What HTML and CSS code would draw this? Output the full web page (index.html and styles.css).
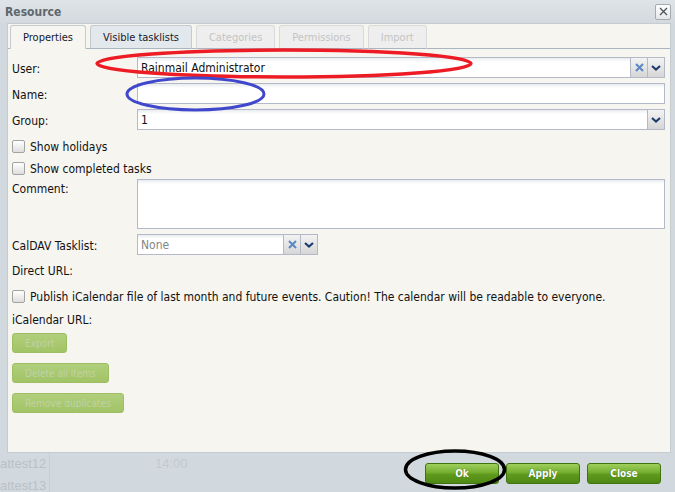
FILE: index.html
```html
<!DOCTYPE html>
<html lang="en">
<head>
  <meta charset="UTF-8">
  <meta name="viewport" content="width=device-width, initial-scale=1.0">
  <title>Resource</title>
  <link rel="stylesheet" href="styles.css">
</head>
<body>
  <div class="window">
    <div class="titlebar">
      <span class="title">Resource</span>
      <button class="close-btn" title="Close">
        <svg width="9" height="9" viewBox="0 0 9 9"><path d="M1 1L8 8M8 1L1 8" stroke="#4d5358" stroke-width="1.3"/></svg>
      </button>
    </div>

    <div class="panel">
      <div class="tabs">
        <div class="tab active">Properties</div>
        <div class="tab">Visible tasklists</div>
        <div class="tab disabled">Categories</div>
        <div class="tab disabled">Permissions</div>
        <div class="tab disabled">Import</div>
      </div>

      <div class="form">
        <div class="row">
          <label>User:</label>
          <div class="combo">
            <div class="field-text">Rainmail Administrator</div>
            <span class="trigger"><svg width="9" height="9" viewBox="0 0 9 9"><path d="M1 1L8 8M8 1L1 8" stroke="#5b87c2" stroke-width="2"/></svg></span>
            <span class="trigger"><svg width="10" height="6" viewBox="0 0 10 6"><path d="M1 1L5 4.5L9 1" fill="none" stroke="#1f3c6e" stroke-width="2.2"/></svg></span>
          </div>
        </div>
        <div class="row">
          <label>Name:</label>
          <div class="combo"><div class="field-text"></div></div>
        </div>
        <div class="row">
          <label>Group:</label>
          <div class="combo">
            <div class="field-text">1</div>
            <span class="trigger"><svg width="10" height="6" viewBox="0 0 10 6"><path d="M1 1L5 4.5L9 1" fill="none" stroke="#1f3c6e" stroke-width="2.2"/></svg></span>
          </div>
        </div>

        <div class="check-row"><span class="checkbox"></span><span>Show holidays</span></div>
        <div class="check-row"><span class="checkbox"></span><span>Show completed tasks</span></div>

        <div class="row row-top">
          <label class="label-top">Comment:</label>
          <div class="textarea"></div>
        </div>

        <div class="row row-tight">
          <label>CalDAV Tasklist:</label>
          <div class="combo combo-small">
            <div class="field-text placeholder">None</div>
            <span class="trigger"><svg width="9" height="9" viewBox="0 0 9 9"><path d="M1 1L8 8M8 1L1 8" stroke="#5b87c2" stroke-width="2"/></svg></span>
            <span class="trigger"><svg width="10" height="6" viewBox="0 0 10 6"><path d="M1 1L5 4.5L9 1" fill="none" stroke="#1f3c6e" stroke-width="2.2"/></svg></span>
          </div>
        </div>

        <div class="text-row">Direct URL:</div>
        <div class="check-row"><span class="checkbox"></span><span>Publish iCalendar file of last month and future events. Caution! The calendar will be readable to everyone.</span></div>
        <div class="text-row text-row-short">iCalendar URL:</div>

        <div class="tool-buttons">
          <button class="btn-disabled">Export</button>
          <button class="btn-disabled">Delete all items</button>
          <button class="btn-disabled">Remove duplicates</button>
        </div>
      </div>
    </div>

    <div class="footer">
      <div class="ghost-col">
        <span>attest12</span>
        <span>attest13</span>
      </div>
      <span class="ghost-time">14:00</span>
      <div class="actions">
        <button class="btn-green">Ok</button>
        <button class="btn-green">Apply</button>
        <button class="btn-green">Close</button>
      </div>
    </div>

    <!-- hand-drawn markers on the screenshot -->
    <svg class="marks" width="675" height="492" viewBox="0 0 675 492">
      <ellipse cx="284" cy="63.5" rx="187" ry="13.5" fill="none" stroke="#ed1c24" stroke-width="3.5"/>
      <ellipse cx="195.5" cy="94" rx="68.5" ry="16" fill="none" stroke="#3f48cc" stroke-width="3"/>
      <ellipse cx="455" cy="469.5" rx="49.5" ry="18.5" fill="none" stroke="#000" stroke-width="3.5"/>
    </svg>
  </div>
</body>
</html>
```

FILE: styles.css
```css
* {
  box-sizing: border-box;
  margin: 0;
  padding: 0;
}

body {
  background: #d3dadf;
  font-family: "DejaVu Sans Condensed", "DejaVu Sans", sans-serif;
  font-size: 12px;
  color: #111;
}

button {
  font-family: inherit;
}

.window {
  position: relative;
  width: 675px;
  height: 492px;
  overflow: hidden;
  display: flex;
  flex-direction: column;
  background: #d2d9de;
}

.titlebar {
  flex-shrink: 0;
  height: 23px;
  display: flex;
  align-items: center;
  justify-content: space-between;
  padding: 0 4px 0 5px;
  background: linear-gradient(#dfe4e8, #d3d9de);
}

.title {
  font-weight: bold;
  font-size: 12px;
  color: #60676c;
}

.close-btn {
  width: 16px;
  height: 16px;
  border: 1px solid #a3abb1;
  border-radius: 2px;
  background: linear-gradient(#fdfdfd, #e4e7e9);
  display: flex;
  align-items: center;
  justify-content: center;
}

.panel {
  flex-shrink: 0;
  margin: 0 4px 0 7px;
  height: 430px;
  background: #f6f5f0;
  border: 1px solid #c5ccd1;
  display: flex;
  flex-direction: column;
}

.tabs {
  height: 25px;
  display: flex;
  align-items: flex-end;
  gap: 4px;
  padding: 1px 0 0 2px;
  border-bottom: 1px solid #a9b6c0;
}

.tab {
  height: 24px;
  margin-bottom: -1px;
  padding: 1px 12px 0;
  display: flex;
  align-items: center;
  font-size: 11px;
  color: #16202a;
  background: #e3e8ec;
  border: 1px solid #c3cbd1;
  border-bottom-color: #a9b6c0;
  border-radius: 3px 3px 0 0;
}

.tab.active {
  background: #f6f5f0;
  border-bottom-color: #f6f5f0;
}

.tab.disabled {
  background: #eeeeee;
  color: #c4c4c4;
  border-color: #dadada;
  border-bottom-color: #a9b6c0;
}

.form {
  padding: 8px 5px 0 4px;
  display: flex;
  flex-direction: column;
}

.row {
  display: grid;
  grid-template-columns: 125px 1fr;
  align-items: center;
  margin-bottom: 5px;
}

.row label {
  padding-top: 2px;
}

.row-top {
  align-items: start;
}

.row-tight {
  margin-bottom: 0;
}

.row .label-top {
  padding-top: 3px;
}

.combo {
  height: 21px;
  display: flex;
  border: 1px solid #b4b9ca;
  background: linear-gradient(#e9ecef, #ffffff 4px);
}

.combo-small {
  width: 181px;
}

.field-text {
  flex: 1;
  padding: 1px 3px 0;
  line-height: 19px;
  white-space: nowrap;
}

.placeholder {
  color: #858585;
}

.trigger {
  width: 17px;
  display: flex;
  align-items: center;
  justify-content: center;
  border-left: 1px solid #b4b9ca;
  background: linear-gradient(#f3f3f3, #d6d6d6);
}

.check-row {
  height: 22px;
  display: flex;
  align-items: center;
  gap: 5px;
  white-space: nowrap;
}

.check-row span:last-child {
  padding-top: 2px;
}

.checkbox {
  width: 13px;
  height: 13px;
  border: 1px solid #a3a3a3;
  border-radius: 2px;
  background: linear-gradient(#ffffff, #dedede);
}

.textarea {
  height: 50px;
  border: 1px solid #b4b9ca;
  background: linear-gradient(#e9ecef, #ffffff 4px);
}

.text-row {
  height: 30px;
  padding-top: 2px;
  display: flex;
  align-items: center;
}

.text-row-short {
  height: 24px;
}

.tool-buttons {
  margin-top: 2px;
  display: flex;
  flex-direction: column;
  align-items: flex-start;
  gap: 10px;
}

.btn-disabled {
  height: 20px;
  padding: 0 12px;
  font-size: 10px;
  color: #c0d2a4;
  background: linear-gradient(#b1cf7c, #a2c366);
  border: 1px solid #9dbe62;
  border-radius: 3px;
}

.footer {
  flex: 1;
  min-height: 0;
  overflow: hidden;
  display: flex;
  align-items: flex-start;
  padding-right: 14px;
  font-family: "Liberation Sans", Arial, sans-serif;
}

.ghost-col {
  width: 50px;
  height: 100%;
  display: flex;
  flex-direction: column;
  border-right: 1px solid #c8cfd4;
  font-size: 13px;
  line-height: 22px;
  color: #b9c1c6;
}

.ghost-time {
  margin: 0 0 0 105px;
  font-size: 13px;
  line-height: 22px;
  color: #c2c9ce;
}

.actions {
  margin: 10px 0 0 auto;
  display: flex;
  gap: 7px;
}

.btn-green {
  width: 74px;
  height: 21px;
  font-family: "DejaVu Sans Condensed", "DejaVu Sans", sans-serif;
  font-size: 10px;
  font-weight: bold;
  color: #fff;
  text-shadow: 0 0 1px #2f5a0e;
  background: linear-gradient(#9fcf5d, #74ae2f 45%, #5f9a1d 55%, #4f8914);
  border: 1px solid #3f7310;
  border-radius: 3px;
}

.marks {
  position: absolute;
  top: 0;
  left: 0;
  pointer-events: none;
}
```
